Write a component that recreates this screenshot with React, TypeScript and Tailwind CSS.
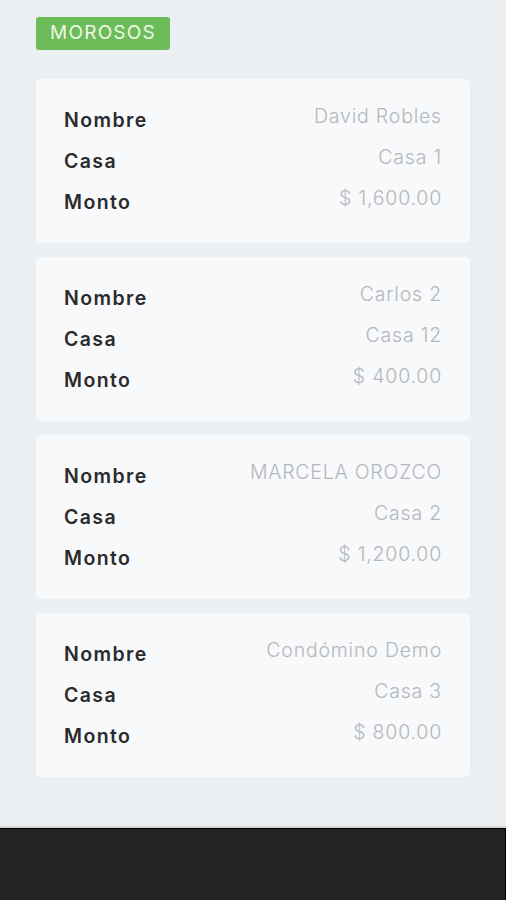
import React from "react";

const rows = [
  { nombre: "David Robles", casa: "Casa 1", monto: "$ 1,600.00" },
  { nombre: "Carlos 2", casa: "Casa 12", monto: "$ 400.00" },
  { nombre: "MARCELA OROZCO", casa: "Casa 2", monto: "$ 1,200.00" },
  { nombre: "Condómino Demo", casa: "Casa 3", monto: "$ 800.00" },
];

function Row({ label, value }: { label: string; value: string }) {
  return (
    <div className="flex h-[41px] items-center justify-between">
      <span className="pt-[2px] text-[19.5px] font-semibold tracking-[1.4px] text-[#2b2b2e]">{label}</span>
      <span className="pb-[6px] text-[19.5px] font-light tracking-[0.8px] text-[#b4b7bb]">{value}</span>
    </div>
  );
}

export default function App() {
  return (
    <div
      className="flex min-h-[900px] w-[506px] flex-col bg-[#eceff2]"
      style={{ fontFamily: 'Inter, "Open Sans", sans-serif' }}
    >
      <div className="flex flex-1 flex-col px-[36px] pt-[17px]">
        <div className="flex">
          <span className="flex h-[33px] w-[134px] items-center justify-center rounded-[3px] bg-[#6cbd5a] text-[19px] tracking-[1.2px] text-[#eef7e6]">
            MOROSOS
          </span>
        </div>
        <div className="mt-[29px] flex flex-col gap-[14px]">
          {rows.map((r, i) => (
            <div key={i} className="rounded-[5px] bg-[#f7f9fb] px-[28px] pb-[21px] pt-5">
              <Row label="Nombre" value={r.nombre} />
              <Row label="Casa" value={r.casa} />
              <Row label="Monto" value={r.monto} />
            </div>
          ))}
        </div>
      </div>
      <div className="h-[2px] bg-[#d5d8db]" />
      <div className="h-[72px] border-r border-t border-black bg-[#242424]" />
    </div>
  );
}
